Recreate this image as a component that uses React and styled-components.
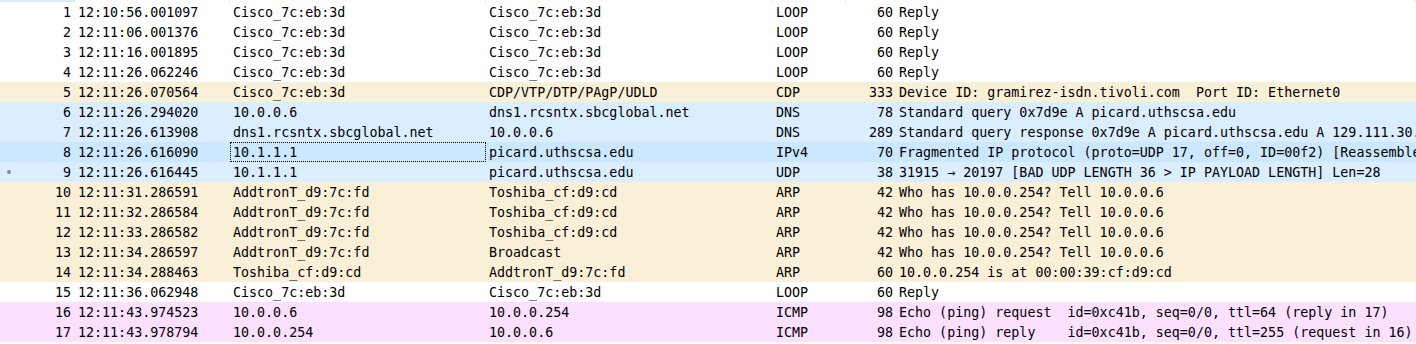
import styled, { createGlobalStyle } from "styled-components";

const GlobalStyle = createGlobalStyle`
  html, body {
    margin: 0;
    padding: 0;
    background: #ffffff;
  }
  body {
    font-family: "DejaVu Sans Mono", "Liberation Mono", monospace;
    font-size: 13.33px;
    color: #000000;
  }
`;

// column template shared by the header strip and every row
const COLUMNS = "75px 155px 256px 287px 73px 50px 1fr";

const ROW_COLORS = {
  white: "#ffffff",
  udp: "#daeeff",
  sel: "#cce8ff",
  arp: "#faf0d7",
  icmp: "#fce0ff",
};

const packets = [
  [1, "12:10:56.001097", "Cisco_7c:eb:3d", "Cisco_7c:eb:3d", "LOOP", 60, "Reply", "white"],
  [2, "12:11:06.001376", "Cisco_7c:eb:3d", "Cisco_7c:eb:3d", "LOOP", 60, "Reply", "white"],
  [3, "12:11:16.001895", "Cisco_7c:eb:3d", "Cisco_7c:eb:3d", "LOOP", 60, "Reply", "white"],
  [4, "12:11:26.062246", "Cisco_7c:eb:3d", "Cisco_7c:eb:3d", "LOOP", 60, "Reply", "white"],
  [5, "12:11:26.070564", "Cisco_7c:eb:3d", "CDP/VTP/DTP/PAgP/UDLD", "CDP", 333, "Device ID: gramirez-isdn.tivoli.com  Port ID: Ethernet0", "arp"],
  [6, "12:11:26.294020", "10.0.0.6", "dns1.rcsntx.sbcglobal.net", "DNS", 78, "Standard query 0x7d9e A picard.uthscsa.edu", "udp"],
  [7, "12:11:26.613908", "dns1.rcsntx.sbcglobal.net", "10.0.0.6", "DNS", 289, "Standard query response 0x7d9e A picard.uthscsa.edu A 129.111.30.27", "udp"],
  [8, "12:11:26.616090", "10.1.1.1", "picard.uthscsa.edu", "IPv4", 70, "Fragmented IP protocol (proto=UDP 17, off=0, ID=00f2) [Reassembled in #9]", "sel"],
  [9, "12:11:26.616445", "10.1.1.1", "picard.uthscsa.edu", "UDP", 38, "31915 \u2192 20197 [BAD UDP LENGTH 36 > IP PAYLOAD LENGTH] Len=28", "udp"],
  [10, "12:11:31.286591", "AddtronT_d9:7c:fd", "Toshiba_cf:d9:cd", "ARP", 42, "Who has 10.0.0.254? Tell 10.0.0.6", "arp"],
  [11, "12:11:32.286584", "AddtronT_d9:7c:fd", "Toshiba_cf:d9:cd", "ARP", 42, "Who has 10.0.0.254? Tell 10.0.0.6", "arp"],
  [12, "12:11:33.286582", "AddtronT_d9:7c:fd", "Toshiba_cf:d9:cd", "ARP", 42, "Who has 10.0.0.254? Tell 10.0.0.6", "arp"],
  [13, "12:11:34.286597", "AddtronT_d9:7c:fd", "Broadcast", "ARP", 42, "Who has 10.0.0.254? Tell 10.0.0.6", "arp"],
  [14, "12:11:34.288463", "Toshiba_cf:d9:cd", "AddtronT_d9:7c:fd", "ARP", 60, "10.0.0.254 is at 00:00:39:cf:d9:cd", "arp"],
  [15, "12:11:36.062948", "Cisco_7c:eb:3d", "Cisco_7c:eb:3d", "LOOP", 60, "Reply", "white"],
  [16, "12:11:43.974523", "10.0.0.6", "10.0.0.254", "ICMP", 98, "Echo (ping) request  id=0xc41b, seq=0/0, ttl=64 (reply in 17)", "icmp"],
  [17, "12:11:43.978794", "10.0.0.254", "10.0.0.6", "ICMP", 98, "Echo (ping) reply    id=0xc41b, seq=0/0, ttl=255 (request in 16)", "icmp"],
];

const List = styled.div`
  width: 1416px;
  overflow: hidden;
`;

const HeaderStrip = styled.div`
  display: grid;
  grid-template-columns: ${COLUMNS};
  height: 2px;
`;

const HeaderCell = styled.div`
  background: ${(p) => (p.sorted ? "#d9ebf9" : "#ffffff")};
  border-right: 1px solid #e5e5e5;
`;

const Row = styled.div`
  display: grid;
  grid-template-columns: ${COLUMNS};
  height: 20px;
  background: ${(p) => ROW_COLORS[p.tone]};
`;

const Cell = styled.div`
  position: relative;
  display: flex;
  align-items: center;
  justify-content: ${(p) => (p.right ? "flex-end" : "flex-start")};
  padding: ${(p) => (p.right ? "0 4px 0 0" : "0 0 0 3px")};
  white-space: pre;
  overflow: hidden;
  outline: ${(p) => (p.focused ? "1px dotted #000000" : "none")};
  outline-offset: -1px;
`;

const RelatedDot = styled.span`
  position: absolute;
  left: 7px;
  top: 8px;
  width: 4px;
  height: 4px;
  border-radius: 50%;
  background: #8a8a8a;
`;

export default function App() {
  return (
    <List>
      <GlobalStyle />
      <HeaderStrip>
        <HeaderCell sorted />
        <HeaderCell />
        <HeaderCell />
        <HeaderCell />
        <HeaderCell />
        <HeaderCell />
        <HeaderCell />
      </HeaderStrip>
      {packets.map(([no, time, src, dst, proto, len, info, tone]) => (
        <Row key={no} tone={tone}>
          <Cell right>
            {no === 9 && <RelatedDot />}
            {no}
          </Cell>
          <Cell>{time}</Cell>
          <Cell focused={no === 8}>{src}</Cell>
          <Cell>{dst}</Cell>
          <Cell>{proto}</Cell>
          <Cell right style={{ paddingRight: 3 }}>{len}</Cell>
          <Cell>{info}</Cell>
        </Row>
      ))}
    </List>
  );
}
